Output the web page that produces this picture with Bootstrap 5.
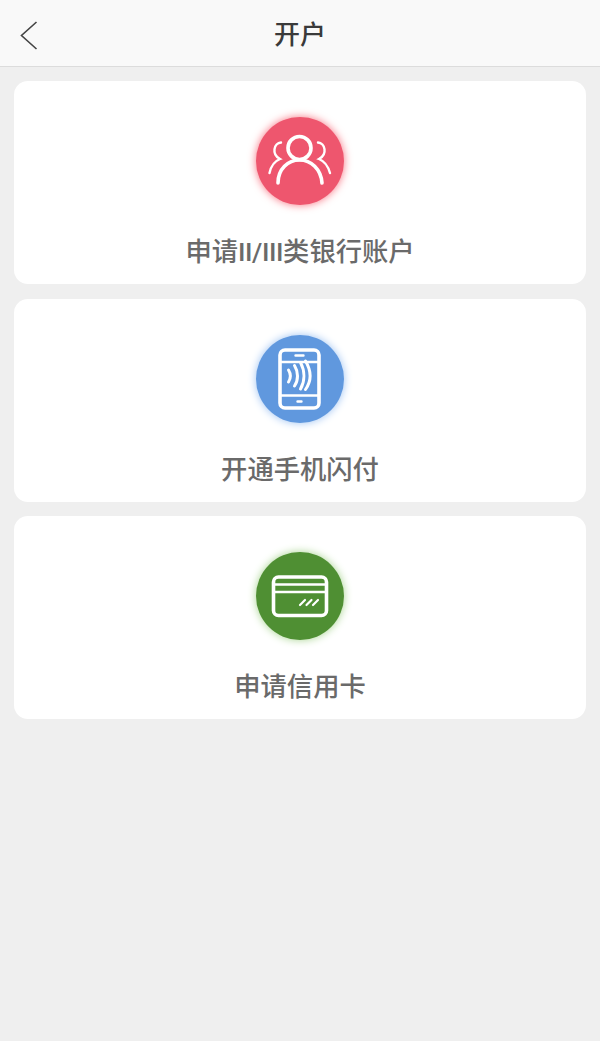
<!DOCTYPE html>
<html lang="zh">

<head>
  <meta charset="UTF-8" />
  <title>开户</title>
  <link href="https://cdn.jsdelivr.net/npm/bootstrap@5.3.2/dist/css/bootstrap.min.css" rel="stylesheet" />
  <script src="https://cdn.jsdelivr.net/npm/bootstrap@5.3.2/dist/js/bootstrap.bundle.min.js" defer></script>
  <style>
    body {
      background: #efefef;
      font-family: "Noto Sans CJK SC", "Liberation Sans", sans-serif;
      min-height: 1041px;
    }

    .top-bar {
      height: 67px;
      background: #f9f9f9;
      border-bottom: 1px solid #dcdcdc;
    }

    .back-btn {
      left: 20px;
      top: 21px;
      line-height: 0;
    }

    .top-title {
      font-size: 26px;
      font-weight: 500;
      color: #3a3a3a;
      line-height: 1;
      margin-top: -1px;
    }

    .menu-list {
      padding: 14px 14px 0;
      gap: 14.5px;
    }

    .menu-card {
      height: 203px;
      background: #fff;
      border-radius: 14px;
      padding-top: 36px;
    }

    .menu-circle {
      width: 88px;
      height: 88px;
      border-radius: 50%;
    }

    .menu-circle svg {
      fill: none;
      stroke: #fff;
      stroke-width: 3.6;
      stroke-linecap: round;
    }

    .c-red {
      background: #ee566e;
      box-shadow: 0 0 9px #f8717f;
    }

    .c-blue {
      background: #6098de;
      box-shadow: 0 0 9px #9cc2f2;
    }

    .c-green {
      background: #4f8f33;
      box-shadow: 0 0 9px #a6d38e;
    }

    .menu-label {
      font-family: Roboto, "Noto Sans CJK SC", sans-serif;
      font-size: 26.3px;
      font-weight: 500;
      color: #6a6a6a;
      line-height: 36px;
      margin-top: 29px;
    }

    .latin-part {
      letter-spacing: -0.4px;
    }
  </style>
</head>

<body>
  <div class="top-bar position-relative d-flex align-items-center justify-content-center">
    <a href="#" class="back-btn position-absolute">
      <svg width="18" height="30" viewBox="0 0 18 30" fill="none" stroke="#444" stroke-width="1.6">
        <path d="M16.5 1 L1.5 14.5 L16.5 28" />
      </svg>
    </a>
    <div class="top-title">开户</div>
  </div>

  <div class="menu-list d-flex flex-column">
    <div class="menu-card d-flex flex-column align-items-center">
      <div class="menu-circle c-red">
        <svg width="88" height="88" viewBox="0 0 88 88">
          <circle cx="43.5" cy="31" r="11.5" />
          <path d="M22 66 C22 52 32 43 43.5 43 C55 43 65 52 66 66" />
          <path d="M25 25.5 C18 26 15 37 24 42 C19 44 15 49 13.5 56" stroke-width="2.4" />
          <path d="M62 25.5 C69 26 72 37 63 42 C68 44 72 49 74 56" stroke-width="2.4" />
        </svg>
      </div>
      <div class="menu-label">申请<span class="latin-part">II/III</span>类银行账户</div>
    </div>

    <div class="menu-card d-flex flex-column align-items-center">
      <div class="menu-circle c-blue">
        <svg width="88" height="88" viewBox="0 0 88 88">
          <rect x="24" y="15" width="39" height="58" rx="5" />
          <path d="M24 27 H63 M24 60.5 H63" stroke-width="2.4" />
          <path d="M39.5 20.5 H47.5 M41.5 66.5 H45.5" stroke-width="2.4" />
          <path d="M32.5 35 C35 39 35 43 32.5 47" stroke-width="3" />
          <path d="M38.5 30.5 C42.5 37 42.5 45 38.5 51" stroke-width="3" />
          <path d="M44.5 27.5 C49 36 49 46 44.5 54" stroke-width="3" />
          <path d="M49.5 26 C55.5 36 55.5 46 49.5 54.5" stroke-width="3" />
        </svg>
      </div>
      <div class="menu-label">开通手机闪付</div>
    </div>

    <div class="menu-card d-flex flex-column align-items-center">
      <div class="menu-circle c-green">
        <svg width="88" height="88" viewBox="0 0 88 88">
          <rect x="17.5" y="25" width="53" height="38.5" rx="5" />
          <path d="M18 32.5 H70 M18 40 H70" stroke-width="2.4" />
          <path d="M44 53 L49 48 M50.5 53 L55.5 48 M57 53 L62 48" stroke-width="2.2" />
        </svg>
      </div>
      <div class="menu-label">申请信用卡</div>
    </div>
  </div>
</body>

</html>
